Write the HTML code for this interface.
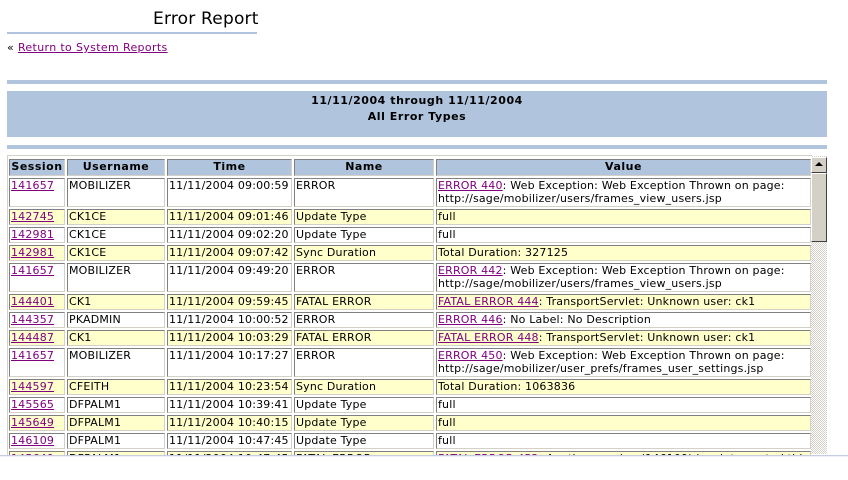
<!DOCTYPE html>
<html><head><meta charset="utf-8"><style>
body{margin:0;width:848px;height:480px;background:#fff;font-family:"DejaVu Sans","Liberation Sans",sans-serif;font-size:11px;color:#000;position:relative;overflow:hidden;letter-spacing:0.18px}
.abs{position:absolute}
a{color:#800080;text-decoration:underline}
.wrap{position:absolute;left:7px;top:155px;width:804px;height:299px;overflow:hidden;border-top:1px solid #d4d0c8;border-left:1px solid #d4d0c8}
table{border-collapse:separate;border-spacing:2px;table-layout:fixed;width:806px;margin:1px 0 0 -1px}
td,th{border-top:1px solid #808080;border-left:1px solid #808080;border-bottom:1px solid #d4d0c8;border-right:1px solid #d4d0c8;padding:0 1px;line-height:14px;height:14px;vertical-align:top;white-space:nowrap;overflow:hidden}
th{background:#b0c4de;font-weight:bold;text-align:center;padding-top:0;height:15px;letter-spacing:0.5px}
tr.y td{background:#ffffcc}
tr.w td{background:#fff}
tr.two td{height:27px;line-height:13px}
td.v{white-space:normal}
</style></head><body>
<div class="abs" style="left:153px;top:9px;font-size:17px;letter-spacing:0.2px">Error Report</div>
<div class="abs" style="left:7px;top:32px;width:250px;height:2px;background:#b0c4de"></div>
<div class="abs" style="left:7px;top:41px;letter-spacing:0.35px">« <a>Return to System Reports</a></div>
<div class="abs" style="left:7px;top:80px;width:820px;height:4px;background:#b0c4de"></div>
<div class="abs" style="left:7px;top:91px;width:820px;height:46px;background:#b0c4de;text-align:center;font-weight:bold;line-height:16px;padding-top:2px;box-sizing:border-box;letter-spacing:0.55px">11/11/2004 through 11/11/2004<br>All Error Types</div>
<div class="abs" style="left:7px;top:145px;width:820px;height:4px;background:#b0c4de"></div>
<div class="wrap"><table>
<colgroup><col style="width:56px"><col style="width:98px"><col style="width:125px"><col style="width:140px"><col></colgroup>
<tr><th>Session</th><th>Username</th><th>Time</th><th>Name</th><th>Value</th></tr>
<tr class="w two"><td><a>141657</a></td><td>MOBILIZER</td><td>11/11/2004 09:00:59</td><td>ERROR</td><td class="v"><a>ERROR 440</a>: Web Exception: Web Exception Thrown on page:<br>http://sage/mobilizer/users/frames_view_users.jsp</td></tr>
<tr class="y"><td><a>142745</a></td><td>CK1CE</td><td>11/11/2004 09:01:46</td><td>Update Type</td><td>full</td></tr>
<tr class="w"><td><a>142981</a></td><td>CK1CE</td><td>11/11/2004 09:02:20</td><td>Update Type</td><td>full</td></tr>
<tr class="y"><td><a>142981</a></td><td>CK1CE</td><td>11/11/2004 09:07:42</td><td>Sync Duration</td><td>Total Duration: 327125</td></tr>
<tr class="w two"><td><a>141657</a></td><td>MOBILIZER</td><td>11/11/2004 09:49:20</td><td>ERROR</td><td class="v"><a>ERROR 442</a>: Web Exception: Web Exception Thrown on page:<br>http://sage/mobilizer/users/frames_view_users.jsp</td></tr>
<tr class="y"><td><a>144401</a></td><td>CK1</td><td>11/11/2004 09:59:45</td><td>FATAL ERROR</td><td><a>FATAL ERROR 444</a>: TransportServlet: Unknown user: ck1</td></tr>
<tr class="w"><td><a>144357</a></td><td>PKADMIN</td><td>11/11/2004 10:00:52</td><td>ERROR</td><td><a>ERROR 446</a>: No Label: No Description</td></tr>
<tr class="y"><td><a>144487</a></td><td>CK1</td><td>11/11/2004 10:03:29</td><td>FATAL ERROR</td><td><a>FATAL ERROR 448</a>: TransportServlet: Unknown user: ck1</td></tr>
<tr class="w two"><td><a>141657</a></td><td>MOBILIZER</td><td>11/11/2004 10:17:27</td><td>ERROR</td><td class="v"><a>ERROR 450</a>: Web Exception: Web Exception Thrown on page:<br>http://sage/mobilizer/user_prefs/frames_user_settings.jsp</td></tr>
<tr class="y"><td><a>144597</a></td><td>CFEITH</td><td>11/11/2004 10:23:54</td><td>Sync Duration</td><td>Total Duration: 1063836</td></tr>
<tr class="w"><td><a>145565</a></td><td>DFPALM1</td><td>11/11/2004 10:39:41</td><td>Update Type</td><td>full</td></tr>
<tr class="y"><td><a>145649</a></td><td>DFPALM1</td><td>11/11/2004 10:40:15</td><td>Update Type</td><td>full</td></tr>
<tr class="w"><td><a>146109</a></td><td>DFPALM1</td><td>11/11/2004 10:47:45</td><td>Update Type</td><td>full</td></tr>
<tr class="y"><td><a>145649</a></td><td>DFPALM1</td><td>11/11/2004 10:47:45</td><td>FATAL ERROR</td><td><a>FATAL ERROR 452</a>: Another session (146109) has interrupted this</td></tr>
</table></div>
<div class="abs" style="left:811px;top:156px;width:16px;height:298px;background:repeating-conic-gradient(#d4d0c8 0 25%,#fff 0 50%) 0 0/2px 2px"></div>
<div class="abs" style="left:811px;top:157px;width:14px;height:14px;background:#d4d0c8;border-right:1px solid #404040;border-bottom:1px solid #404040;border-top:1px solid #fff;border-left:1px solid #fff"></div>
<div class="abs" style="left:815px;top:162px;width:0;height:0;border-left:4px solid transparent;border-right:4px solid transparent;border-bottom:4px solid #000"></div>
<div class="abs" style="left:811px;top:173px;width:14px;height:67px;background:#d4d0c8;border-right:1px solid #404040;border-bottom:1px solid #404040;border-top:1px solid #fff;border-left:1px solid #fff"></div>
<div class="abs" style="left:0;top:455px;width:848px;height:1px;background:#c8cce0"></div>
<div class="abs" style="left:0;top:456px;width:848px;height:1px;background:#eef0f8"></div>
</body></html>
